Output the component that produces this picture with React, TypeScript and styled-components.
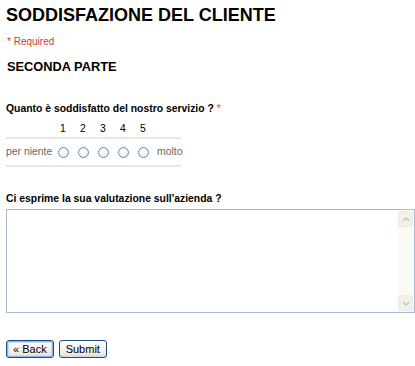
import React from 'react';
import styled, { createGlobalStyle } from 'styled-components';

const GlobalStyle = createGlobalStyle`
  html, body {
    margin: 0;
    padding: 0;
    background: #ffffff;
  }
  body {
    font-family: "Liberation Sans", Arial, sans-serif;
    color: #000000;
  }
`;

const scale = [1, 2, 3, 4, 5];

const App: React.FC = () => {
  return (
    <Page>
      <GlobalStyle />
      <Title>SODDISFAZIONE DEL CLIENTE</Title>
      <Required>* Required</Required>
      <Section>SECONDA PARTE</Section>

      <Question $top={27}>
        Quanto è soddisfatto del nostro servizio ? <Star>*</Star>
      </Question>
      <Scale>
        <ScaleRow>
          <Cell />
          {scale.map((n) => (
            <Cell key={n} $center>
              {n}
            </Cell>
          ))}
          <Cell />
        </ScaleRow>
        <ScaleRow $lined>
          <Cell $muted>per niente</Cell>
          {scale.map((n) => (
            <Cell key={n} $center>
              <Radio />
            </Cell>
          ))}
          <Cell $muted $end>
            molto
          </Cell>
        </ScaleRow>
      </Scale>

      <Question $top={25}>Ci esprime la sua valutazione sull'azienda ?</Question>
      <TextBox>
        <Area />
        <ScrollBar>
          <ScrollButton>
            <Chevron viewBox="0 0 8 5">
              <path d="M1 4 L4 1 L7 4" />
            </Chevron>
          </ScrollButton>
          <ScrollButton>
            <Chevron viewBox="0 0 8 5">
              <path d="M1 1 L4 4 L7 1" />
            </Chevron>
          </ScrollButton>
        </ScrollBar>
      </TextBox>

      <Buttons>
        <Button $focused>« Back</Button>
        <Button>Submit</Button>
      </Buttons>
    </Page>
  );
};

const Page = styled.div`
  width: 415px;
  height: 366px;
  padding: 3px 0 0 6px;
  box-sizing: border-box;
  overflow: hidden;
`;

const Title = styled.h1`
  margin: 0;
  font-size: 18px;
  font-weight: bold;
  line-height: 24px;
`;

const Required = styled.div`
  margin-top: 8px;
  font-size: 10px;
  line-height: 14px;
  color: #cc3d2e;
  padding-left: 1px;
`;

const Section = styled.h2`
  margin: 10px 0 0 1px;
  font-size: 12.8px;
  font-weight: bold;
  line-height: 16px;
`;

const Question = styled.div<{ $top: number }>`
  margin-top: ${(p) => p.$top}px;
  font-size: 10.4px;
  font-weight: bold;
  line-height: 14px;
`;

const Star = styled.span`
  color: #d23a2a;
  font-weight: normal;
`;

const Scale = styled.div`
  margin-top: 4px;
  width: 175px;
  display: grid;
`;

const ScaleRow = styled.div<{ $lined?: boolean }>`
  display: grid;
  grid-template-columns: 47px repeat(5, 20px) 28px;
  align-items: center;
  height: ${(p) => (p.$lined ? 26 : 17)}px;
  border-bottom: 2px solid #e6e6e6;
`;

const Cell = styled.div<{ $center?: boolean; $muted?: boolean; $end?: boolean }>`
  font-size: 10.4px;
  line-height: 14px;
  color: ${(p) => (p.$muted ? '#666666' : '#000000')};
  display: flex;
  justify-content: ${(p) => (p.$center ? 'center' : 'flex-start')};
  white-space: nowrap;
  padding-left: ${(p) => (p.$end ? 4 : 0)}px;
`;

const Radio = styled.span`
  width: 9px;
  height: 9px;
  border-radius: 50%;
  border: 1px solid #6f8aa8;
  background: radial-gradient(circle at 40% 40%, #ffffff 0%, #eceef0 65%, #d2d6dc 100%);
  display: block;
`;

const TextBox = styled.div`
  margin-top: 3px;
  width: 409px;
  height: 104px;
  border: 1px solid #a5bcd4;
  box-sizing: border-box;
  display: flex;
`;

const Area = styled.textarea`
  flex: 1;
  border: none;
  outline: none;
  resize: none;
  margin: 0;
  padding: 2px;
  font-family: inherit;
  background: #ffffff;
`;

const ScrollBar = styled.div`
  width: 15px;
  background: #fbfbf6;
  display: flex;
  flex-direction: column;
  justify-content: space-between;
  padding: 1px 1px 1px 0;
`;

const ScrollButton = styled.div`
  height: 14px;
  background: #f1f1ea;
  border: 1px solid #ececdf;
  border-radius: 2px;
  display: flex;
  align-items: center;
  justify-content: center;
`;

const Chevron = styled.svg`
  width: 8px;
  height: 5px;
  fill: none;
  stroke: #c3c3b8;
  stroke-width: 1.3;
`;

const Buttons = styled.div`
  margin-top: 27px;
  display: flex;
  gap: 5px;
`;

const Button = styled.button<{ $focused?: boolean }>`
  height: 18px;
  padding: 0 6px;
  font-family: "Liberation Sans", Arial, sans-serif;
  font-size: 11px;
  color: #000000;
  border: 1px solid #1c4c8c;
  border-radius: 3px;
  background: linear-gradient(#ffffff, #ecebe6 80%, #d8d6cc);
  box-shadow: ${(p) => (p.$focused ? 'inset 0 0 0 1px #8fb4ea, inset 0 0 0 2px #c8dbf7' : 'none')};
`;

export default App;
